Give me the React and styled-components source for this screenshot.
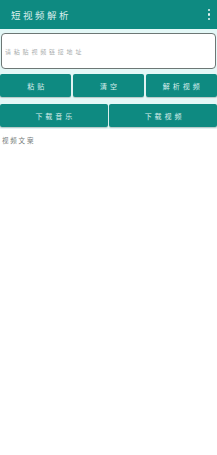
import React from "react";
import styled, { createGlobalStyle } from "styled-components";

const Global = createGlobalStyle`
    html, body {
        margin: 0;
        padding: 0;
        background: #ffffff;
        font-family: "Noto Sans CJK SC", "Noto Sans", sans-serif;
    }
`

const Page = styled.div`
    width: 217px;
    min-height: 455px;
    background: #ffffff;
    display: flex;
    flex-direction: column;
`

const TopBar = styled.header`
    height: 29px;
    background: #0e8a81;
    display: flex;
    align-items: center;
    justify-content: space-between;
    padding: 0 7px 0 11px;
    box-shadow: 0 1px 2px rgba(0, 0, 0, 0.25);
`

const Title = styled.h1`
    margin: 0;
    font-size: 9.5px;
    font-weight: 400;
    letter-spacing: 2.5px;
    color: #dcefee;
`

const Dots = styled.div`
    display: flex;
    flex-direction: column;
    gap: 2px;
    span {
        width: 2.5px;
        height: 2.5px;
        border-radius: 50%;
        background: #e8f4f3;
    }
`

const Controls = styled.div`
    display: flex;
    flex-direction: column;
    background: #e4f8f7;
    padding-bottom: 2px;
`

const Input = styled.input`
    margin: 4px 1px 0 1px;
    height: 36px;
    box-sizing: border-box;
    border: 1px solid #6d7775;
    border-radius: 4px;
    background: #ffffff;
    padding: 0 3px;
    font-family: inherit;
    font-size: 6px;
    letter-spacing: 2.8px;
    outline: none;
    &::placeholder {
        color: #a9adad;
    }
`

const Row = styled.div`
    display: grid;
    grid-template-columns: repeat(${p => p.cols}, 1fr);
    gap: 1.5px;
    margin-top: ${p => p.top}px;
`

const Button = styled.button`
    height: 23px;
    border: none;
    border-radius: 2px;
    background: #0e8a81;
    color: #d8eeec;
    font-family: inherit;
    font-size: 7px;
    letter-spacing: 3px;
    padding: 0 0 0 3px;
    box-shadow: 0 1px 1px rgba(0, 0, 0, 0.2);
`

const Label = styled.div`
    margin: 6px 0 0 2px;
    font-size: 6.5px;
    letter-spacing: 1.8px;
    color: #767b7a;
`

const App = () => {
    return(
        <Page>
            <Global />
            <TopBar>
                <Title>短视频解析</Title>
                <Dots><span /><span /><span /></Dots>
            </TopBar>
            <Controls>
                <Input placeholder="请粘贴视频链接地址" />
                <Row cols={3} top={5}>
                    <Button>粘贴</Button>
                    <Button>清空</Button>
                    <Button>解析视频</Button>
                </Row>
                <Row cols={2} top={7}>
                    <Button>下载音乐</Button>
                    <Button>下载视频</Button>
                </Row>
            </Controls>
            <Label>视频文案</Label>
        </Page>
    )
}

export default App
